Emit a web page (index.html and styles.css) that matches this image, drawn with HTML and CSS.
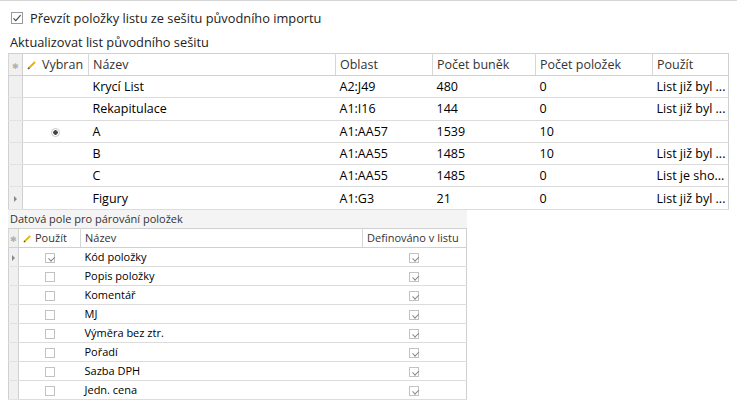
FILE: index.html
```html
<!DOCTYPE html>
<html lang="cs">
<head>
<meta charset="utf-8">
<link rel="stylesheet" href="styles.css">
</head>
<body>
<div class="page">
  <label class="opt">
    <span class="cb big"><svg viewBox="0 0 12 12"><path d="M2.5 6.3 L4.8 8.6 L9.6 3.2" fill="none" stroke="#444" stroke-width="1.1"/></svg></span>
    <span>Převzít položky listu ze sešitu původního importu</span>
  </label>
  <div class="caption">Aktualizovat list původního sešitu</div>
  <table class="grid g1">
    <colgroup>
      <col style="width:14px"><col style="width:66px"><col style="width:247px"><col style="width:97px"><col style="width:103px"><col style="width:117px"><col style="width:76px">
    </colgroup>
    <thead>
      <tr>
        <th class="ind"><span class="star">✱</span></th>
        <th class="clip"><span class="pen"><svg viewBox="0 0 10 10"><path d="M1.5 8.5 L8 2" stroke="#e8b400" stroke-width="2" stroke-linecap="butt"/><path d="M1 9 L2.3 7.7" stroke="#555" stroke-width="1.4"/></svg></span>Vybran</th>
        <th>Název</th><th>Oblast</th><th>Počet buněk</th><th>Počet položek</th><th>Použít</th>
      </tr>
    </thead>
    <tbody>
      <tr><td class="ind"></td><td></td><td>Krycí List</td><td>A2:J49</td><td>480</td><td>0</td><td class="use">List již byl ...</td></tr>
      <tr><td class="ind"></td><td></td><td>Rekapitulace</td><td>A1:I16</td><td>144</td><td>0</td><td class="use">List již byl ...</td></tr>
      <tr><td class="ind"></td><td class="ctr"><span class="radio"></span></td><td>A</td><td>A1:AA57</td><td>1539</td><td>10</td><td class="use"></td></tr>
      <tr><td class="ind"></td><td></td><td>B</td><td>A1:AA55</td><td>1485</td><td>10</td><td class="use">List již byl ...</td></tr>
      <tr><td class="ind"></td><td></td><td>C</td><td>A1:AA55</td><td>1485</td><td>0</td><td class="use">List je sho...</td></tr>
      <tr><td class="ind"><span class="tri"></span></td><td></td><td>Figury</td><td>A1:G3</td><td>21</td><td>0</td><td class="use">List již byl ...</td></tr>
    </tbody>
  </table>
  <div class="panel">
    <div class="plabel">Datová pole pro párování položek</div>
    <table class="grid g2">
      <colgroup>
        <col style="width:10px"><col style="width:62px"><col style="width:282px"><col style="width:104px">
      </colgroup>
      <thead>
        <tr>
          <th class="ind"><span class="star">✱</span></th>
          <th><span class="pen"><svg viewBox="0 0 10 10"><path d="M1.5 8.5 L8 2" stroke="#e8b400" stroke-width="2"/><path d="M1 9 L2.3 7.7" stroke="#555" stroke-width="1.4"/></svg></span>Použít</th>
          <th>Název</th>
          <th>Definováno v listu</th>
        </tr>
      </thead>
      <tbody>
        <tr><td class="ind"><span class="tri"></span></td><td class="ctr"><span class="cb on"></span></td><td>Kód položky</td><td class="ctr"><span class="cb on"></span></td></tr>
        <tr><td class="ind"></td><td class="ctr"><span class="cb"></span></td><td>Popis položky</td><td class="ctr"><span class="cb on"></span></td></tr>
        <tr><td class="ind"></td><td class="ctr"><span class="cb"></span></td><td>Komentář</td><td class="ctr"><span class="cb on"></span></td></tr>
        <tr><td class="ind"></td><td class="ctr"><span class="cb"></span></td><td>MJ</td><td class="ctr"><span class="cb on"></span></td></tr>
        <tr><td class="ind"></td><td class="ctr"><span class="cb"></span></td><td>Výměra bez ztr.</td><td class="ctr"><span class="cb on"></span></td></tr>
        <tr><td class="ind"></td><td class="ctr"><span class="cb"></span></td><td>Pořadí</td><td class="ctr"><span class="cb on"></span></td></tr>
        <tr><td class="ind"></td><td class="ctr"><span class="cb"></span></td><td>Sazba DPH</td><td class="ctr"><span class="cb on"></span></td></tr>
        <tr><td class="ind"></td><td class="ctr"><span class="cb"></span></td><td>Jedn. cena</td><td class="ctr"><span class="cb on"></span></td></tr>
      </tbody>
    </table>
  </div>
</div>
</body>
</html>
```

FILE: styles.css
```css
html, body { margin: 0; padding: 0; background: #fff; }
body {
  font-family: "Open Sans", "Noto Sans", "Liberation Sans", sans-serif;
  font-size: 12px;
  color: #111;
  width: 737px;
  height: 420px;
  overflow: hidden;
  border-top: 1px solid #d6d6d6;
  box-sizing: border-box;
}
.page { padding: 0 0 0 8px; }

.opt {
  display: flex;
  align-items: center;
  gap: 7px;
  height: 17px;
  margin: 8px 0 0 3px;
  color: #222;
  font-size: 12.8px;
}
.caption {
  margin: 8px 0 0 2px;
  height: 19px;
  line-height: 17px;
  color: #222;
  font-size: 12.8px;
}

.cb {
  display: inline-block;
  width: 10px;
  height: 10px;
  border: 1px solid #c2c2c2;
  background: #fff;
  box-sizing: border-box;
  position: relative;
  vertical-align: middle;
}
.cb.big { width: 12px; height: 12px; border-color: #9a9a9a; }
.cb.big svg { position: absolute; left: -1px; top: -1px; width: 12px; height: 12px; }
.cb.on::after {
  content: "";
  position: absolute;
  left: 2px;
  top: 0px;
  width: 5px;
  height: 3px;
  border-left: 1px solid #888;
  border-bottom: 1px solid #888;
  transform: rotate(-45deg) translate(-1px, 2px);
}

.grid {
  border-collapse: collapse;
  table-layout: fixed;
  border: 1px solid #d0d0d0;
}
.grid th, .grid td {
  padding: 0 4px;
  white-space: nowrap;
  overflow: hidden;
  text-align: left;
}
.grid th {
  font-weight: normal;
  color: #333;
  border-left: 1px solid #d6d6d6;
  border-bottom: 1px solid #d0d0d0;
  background: #fff;
}
.grid td {
  border-bottom: 1px solid #dcdcdc;
  color: #000;
  font-weight: 500;
}
.grid td.use { padding: 0 2px 0 4px; }
.grid .ind {
  background: #f0f0f0;
  border-right: 1px solid #d0d0d0;
  padding: 0;
  text-align: center;
  position: relative;
}
.grid td.ind { border-bottom: 1px solid #e2e2e2; }
.grid .ctr { text-align: center; padding: 0; }
.clip { text-overflow: clip; }

.g1 { width: 721px; }
.g1 th { height: 21px; font-size: 12.5px; }
.g1 td { height: 21.3px; font-size: 12.5px; }
.g1 th.clip { padding-right: 0; }

.star { color: #b0b0b0; font-size: 8px; }
.pen { display: inline-block; width: 10px; height: 10px; margin-right: 5px; vertical-align: -1px; }
.pen svg { width: 10px; height: 10px; display: block; }

.radio {
  display: inline-block;
  width: 9px;
  height: 9px;
  border-radius: 50%;
  border: 1px solid #c8c8c8;
  box-sizing: border-box;
  background: radial-gradient(circle, #444 0 2px, #fff 2.5px);
  vertical-align: middle;
}
.tri {
  display: inline-block;
  width: 0; height: 0;
  border-top: 3px solid transparent;
  border-bottom: 3px solid transparent;
  border-left: 3px solid #888;
  vertical-align: middle;
}

.panel { width: 459px; }
.plabel {
  background: #f4f4f4;
  height: 18px;
  line-height: 18px;
  padding-left: 2px;
  font-size: 11px;
  color: #333;
}
.g2 { width: 459px; font-size: 11px; }
.g2 th { height: 18px; font-size: 11px; }
.g2 td { height: 18px; font-size: 11px; font-weight: 500; }
.g2 th .pen { margin-right: 3px; width: 9px; height: 9px; }
.g2 th .pen svg { width: 9px; height: 9px; }
```
